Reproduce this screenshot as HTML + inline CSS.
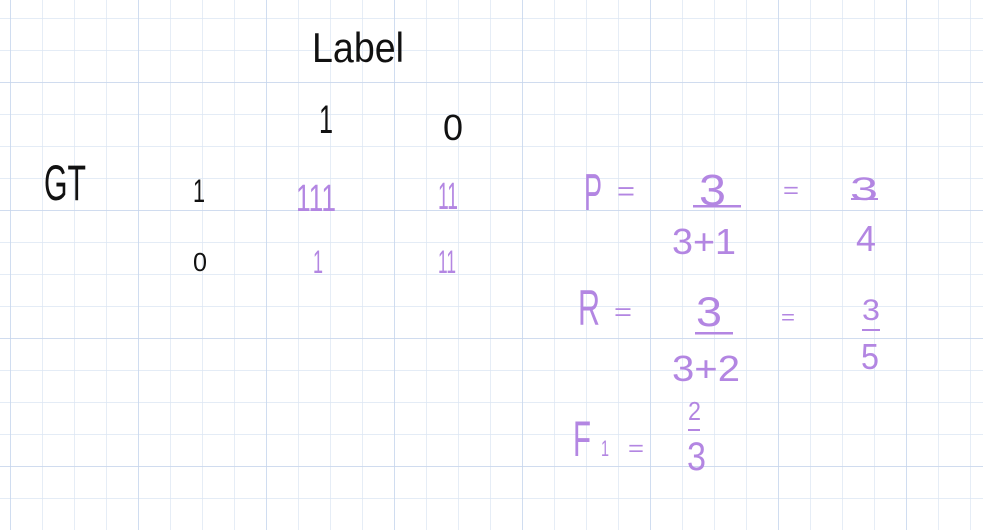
<!DOCTYPE html>
<html><head><meta charset="utf-8"><style>
html,body{margin:0;padding:0;background:#fff;width:983px;height:530px;overflow:hidden}
svg{display:block}
text{font-family:"Liberation Sans",sans-serif;font-weight:normal}
.k{fill:#111}
.p{fill:#b386e2}
</style></head><body>
<svg width="983" height="530" viewBox="0 0 983 530" xmlns="http://www.w3.org/2000/svg">
<defs>
<pattern id="mi" x="10" y="18" width="32" height="32" patternUnits="userSpaceOnUse">
<path d="M0 0V32M0 0H32" stroke="#dce5f3" stroke-width="1.4" fill="none"/>
</pattern>
<pattern id="ma" x="10" y="82" width="128" height="128" patternUnits="userSpaceOnUse">
<path d="M0 0V128M0 0H128" stroke="#c6d5ec" stroke-width="1.5" fill="none"/>
</pattern>
</defs>
<rect width="983" height="530" fill="url(#mi)"/>
<rect width="983" height="530" fill="url(#ma)"/>

<g class="k">
<text x="312" y="62" font-size="42" textLength="92" lengthAdjust="spacingAndGlyphs">Label</text>
<text x="319" y="133" font-size="40" textLength="14" lengthAdjust="spacingAndGlyphs">1</text>
<text x="443" y="140" font-size="36" textLength="20" lengthAdjust="spacingAndGlyphs">0</text>
<text x="44" y="200" font-size="50" textLength="42" lengthAdjust="spacingAndGlyphs">GT</text>
<text x="193" y="202" font-size="32" textLength="12" lengthAdjust="spacingAndGlyphs">1</text>
<text x="193" y="271" font-size="26" textLength="14" lengthAdjust="spacingAndGlyphs">0</text>
</g>
<g class="p">
<text x="296" y="211" font-size="38" textLength="40" lengthAdjust="spacingAndGlyphs">111</text>
<text x="438" y="209" font-size="38" textLength="20" lengthAdjust="spacingAndGlyphs">11</text>
<text x="313" y="273" font-size="32" textLength="10" lengthAdjust="spacingAndGlyphs">1</text>
<text x="438" y="273" font-size="32" textLength="18" lengthAdjust="spacingAndGlyphs">11</text>

<text x="584" y="210" font-size="52" textLength="18" lengthAdjust="spacingAndGlyphs">P</text>
<text x="617" y="200" font-size="26" textLength="18" lengthAdjust="spacingAndGlyphs">=</text>
<text x="699" y="205" font-size="44" textLength="27" lengthAdjust="spacingAndGlyphs">3</text>
<rect x="693" y="205" width="48" height="2.5"/>
<text x="672" y="254" font-size="36" textLength="64" lengthAdjust="spacingAndGlyphs">3+1</text>
<text x="783" y="198" font-size="22" textLength="16" lengthAdjust="spacingAndGlyphs">=</text>
<text x="850" y="200" font-size="32" textLength="28" lengthAdjust="spacingAndGlyphs">3</text>
<rect x="851" y="198" width="27" height="2"/>
<text x="856" y="251" font-size="36" textLength="20" lengthAdjust="spacingAndGlyphs">4</text>

<text x="578" y="325" font-size="50" textLength="22" lengthAdjust="spacingAndGlyphs">R</text>
<text x="614" y="320" font-size="24" textLength="18" lengthAdjust="spacingAndGlyphs">=</text>
<text x="696" y="326" font-size="42" textLength="26" lengthAdjust="spacingAndGlyphs">3</text>
<rect x="695" y="332" width="38" height="2.5"/>
<text x="672" y="381" font-size="36" textLength="68" lengthAdjust="spacingAndGlyphs">3+2</text>
<text x="781" y="324" font-size="20" textLength="14" lengthAdjust="spacingAndGlyphs">=</text>
<text x="862" y="320" font-size="30" textLength="18" lengthAdjust="spacingAndGlyphs">3</text>
<rect x="862" y="329" width="18" height="2"/>
<text x="861" y="369" font-size="36" textLength="18" lengthAdjust="spacingAndGlyphs">5</text>

<text x="573" y="456" font-size="50" textLength="18" lengthAdjust="spacingAndGlyphs">F</text>
<text x="601" y="456" font-size="22" textLength="8" lengthAdjust="spacingAndGlyphs">1</text>
<text x="628" y="456" font-size="22" textLength="16" lengthAdjust="spacingAndGlyphs">=</text>
<text x="688" y="420" font-size="26" textLength="13" lengthAdjust="spacingAndGlyphs">2</text>
<rect x="688" y="429" width="12" height="2"/>
<text x="687" y="470" font-size="40" textLength="19" lengthAdjust="spacingAndGlyphs">3</text>
</g>
</svg>
</body></html>
